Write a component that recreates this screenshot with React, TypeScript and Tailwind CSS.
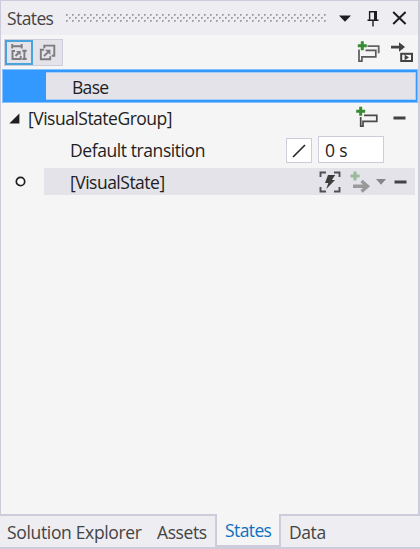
import React from "react";

const textBase = "whitespace-nowrap leading-6";

function Grip() {
  return (
    <svg className="ml-[13px] shrink-0" width="260" height="8" viewBox="0 0 260 8" shapeRendering="crispEdges">
      <defs>
        <pattern id="grip" width="6" height="8" patternUnits="userSpaceOnUse">
          <path d="M0 0h1v2h-1zM0 6h1v2h-1zM3 3h1v2h-1z" fill="#a2a2a6" />
          <path d="M1 0h1v1h-1zM1 6h1v1h-1zM4 3h1v1h-1z" fill="#aaaaae" />
          <path d="M1 1h1v1h-1zM1 7h1v1h-1zM4 4h1v1h-1z" fill="#ceced2" />
        </pattern>
      </defs>
      <rect width="260" height="8" fill="url(#grip)" />
    </svg>
  );
}

function AddStateIcon() {
  return (
    <svg width="24" height="24" viewBox="0 0 24 24" fill="none">
      <path d="M8 9.3h12.8v6H7v4.9H4.7V11" stroke="#4a4a4a" strokeWidth="1.7" />
      <path d="M4.7 .8v9M.2 5.3h9" stroke="#388a34" strokeWidth="3" />
    </svg>
  );
}

function AddGroupIcon() {
  return (
    <svg width="24" height="24" viewBox="0 0 24 24" fill="none">
      <path d="M10.5 6.2h11.2v7" stroke="#646464" strokeWidth="1.8" />
      <path d="M8.5 10.4h10.3v6.4H4.9v4.3H2V9.5" stroke="#5a5a5a" strokeWidth="1.7" />
      <path d="M5.3 1.2v9M.8 5.7h9" stroke="#388a34" strokeWidth="3" />
    </svg>
  );
}

function Minus() {
  return (
    <svg width="13" height="4" viewBox="0 0 13 4">
      <rect x=".5" y=".5" width="12" height="3" fill="#424242" />
    </svg>
  );
}

export default function App() {
  return (
    <div className="flex h-[549px] w-[420px] flex-col overflow-hidden bg-[#f5f5f5] font-['Open_Sans','Noto_Sans',sans-serif] text-[17.5px] text-[#1e1e1e]">
      <main className="flex h-[514px] flex-col border-l border-r-2 border-t border-[#ccccdb]">
        <header className="flex h-[34px] shrink-0 items-center bg-[#eeedf2] pl-[6px] text-[#444444]">
          <span className={`${textBase} w-[46px] tracking-[-0.6px]`}>States</span>
          <Grip />
          <svg className="ml-[13px]" width="12" height="7" viewBox="0 0 12 7">
            <path d="M0 .5h12L6 6.7z" fill="#1e1e1e" />
          </svg>
          <svg className="ml-[16px]" width="12" height="17" viewBox="0 0 12 17">
            <path d="M2.6 10V1.7h6.7V10" fill="none" stroke="#1e1e1e" strokeWidth="1.4" />
            <path d="M7 1h2.9v9H7zM.5 9.6h11v1.5H.5zM5.3 10h1.4v6.5H5.3z" fill="#1e1e1e" />
          </svg>
          <svg className="ml-[13px]" width="15" height="14" viewBox="0 0 15 14">
            <path d="M1.2 1l12.4 12M13.6 1L1.2 13" stroke="#1e1e1e" strokeWidth="2" />
          </svg>
        </header>

        <div className="flex h-[34px] shrink-0 items-center justify-between pl-[3px] pr-[5px]">
          <div className="flex h-[27px] w-[59px] border border-[#ccccdb] bg-[#e4e3ea]">
            <button className="flex h-[25px] w-[28px] items-center justify-center border-2 border-[#4ba3dc]">
              <svg className="shrink-0" width="18" height="18" viewBox="0 0 18 18" fill="none" stroke="#7c7c80" strokeWidth="1.9">
                <path d="M2.2 1v4.6M11.7 1v4.6M2.2 3.3h9.5M5 8H2.5v8h8.2v-3M14.4 7.5v8.8M12.3 7.8h4.4M12.3 16h4.4M5.5 13l3-3" />
                <path d="M6 8h4.6v4.6z" fill="#7c7c80" stroke="none" />
              </svg>
            </button>
            <button className="flex h-[25px] w-[29px] items-center justify-center">
              <svg className="shrink-0" width="17" height="17" viewBox="0 0 17 17" fill="none" stroke="#7c7c80" strokeWidth="1.9">
                <path d="M5.3 4.3V1.6h10v10.1h-2.6M5 5.8H1.8v9.5h9.4v-3M5 12.2l3.8-3.8" />
                <path d="M6 5.7h5.4v5.4z" fill="#7c7c80" stroke="none" />
              </svg>
            </button>
          </div>
          <div className="flex h-6 items-center gap-[10px]">
            <AddGroupIcon />
            <svg width="22" height="20" viewBox="0 0 22 20">
              <path d="M0 3.7h8V.2l6 4.9-6 4.6V6.5H0z" fill="#424242" />
              <rect x="10.2" y="11.8" width="10.8" height="7.2" fill="#f5f5f5" stroke="#424242" strokeWidth="2" />
              <path d="M13.6 12.6l4.4 2.8-4.4 2.8z" fill="#424242" />
            </svg>
          </div>
        </div>

        <div className="ml-px h-[34px] shrink-0 border border-[#85c1ff] bg-[#3399ff] p-[2px] pr-px">
          <div className="ml-[41px] flex h-[28px] items-center border-y border-r border-[#a9cff8] bg-[#e4e3ea] pl-[26px]">
            <span className={`${textBase} relative top-px tracking-[-0.7px]`}>Base</span>
          </div>
        </div>

        <div className="flex h-[32px] shrink-0 items-center pb-[2px] pl-[8px] pr-[12px]">
          <svg width="11" height="11" viewBox="0 0 11 11"><path d="M10.4 .5v10H.3z" fill="#1e1e1e" /></svg>
          <span className={`${textBase} ml-[8px] flex-1 tracking-[-0.5px]`}>[VisualStateGroup]</span>
          <AddStateIcon />
          <span className="ml-[13px] flex"><Minus /></span>
        </div>

        <div className="flex h-[33px] shrink-0 items-center pb-[4px] pl-[69px] pr-[34px]">
          <span className={`${textBase} flex-1 tracking-[-0.42px]`}>Default transition</span>
          <button className="mt-[2px] flex h-[25px] w-[26px] items-center justify-center border border-[#ccccdb] bg-white">
            <svg width="14" height="14" viewBox="0 0 14 14"><path d="M1 13L13 1" stroke="#2d2d2d" strokeWidth="1.7" /></svg>
          </button>
          <div className="ml-[6px] flex h-[27px] w-[66px] items-center border border-[#ccccdb] bg-white pl-[6px]">
            <span className={`${textBase} tracking-[-0.1px]`}>0 s</span>
          </div>
        </div>

        <div className="flex h-[27px] shrink-0 items-center pr-[3px]">
          <div className="flex w-[43px] justify-center pr-[5px]">
            <svg width="11" height="11" viewBox="0 0 11 11"><circle cx="5.5" cy="5.5" r="4.2" fill="#fff" stroke="#1e1e1e" strokeWidth="1.7" /></svg>
          </div>
          <div className="flex h-full flex-1 items-center bg-[#e4e3ea] pl-[26px] pr-[8px]">
            <span className={`${textBase} flex-1 tracking-[-0.5px]`}>[VisualState]</span>
            <svg width="22" height="22" viewBox="0 0 22 22">
              <path d="M1.5 6V1.5H7M15 1.5h5.5V6M20.5 16v4.5H15M7 20.5H1.5V16" fill="none" stroke="#505050" strokeWidth="1.9" />
              <path d="M9 4h7.2l-3.3 5H16l-8.7 9 2-6H6z" fill="#3d3d3d" />
            </svg>
            <svg className="ml-[9px]" width="21" height="22" viewBox="0 0 21 22">
              <path d="M5 .5v9M.5 5h9" stroke="#98b99b" strokeWidth="3" />
              <path d="M3 15.2h14M11.5 10l6 5.2-6 5.3" fill="none" stroke="#999" strokeWidth="3.4" />
            </svg>
            <svg className="ml-[5px]" width="10" height="6" viewBox="0 0 10 6"><path d="M0 0h10L5 5.7z" fill="#85858a" /></svg>
            <span className="ml-[8px] flex"><Minus /></span>
          </div>
        </div>
      </main>

      <nav className="flex h-[35px] shrink-0 bg-[#eeedf2] text-[#444444]">
        <div className="flex w-[217px] items-center border-y-2 border-r-2 border-[#ccccdb] pl-[7px]">
          <span className={`${textBase} w-[150px] tracking-[-0.34px]`}>Solution Explorer</span>
          <span className={`${textBase} tracking-[-0.4px]`}>Assets</span>
        </div>
        <div className="flex w-[62px] items-center border-b-4 border-[#ccccdb] bg-[#f5f5f5] pl-[8px] text-[#0e70c0]">
          <span className={`${textBase} tracking-[-0.6px]`}>States</span>
        </div>
        <div className="flex flex-1 items-center border-y-2 border-l-2 border-[#ccccdb] pl-[8px]">
          <span className={`${textBase} tracking-[-0.4px]`}>Data</span>
        </div>
      </nav>
    </div>
  );
}
